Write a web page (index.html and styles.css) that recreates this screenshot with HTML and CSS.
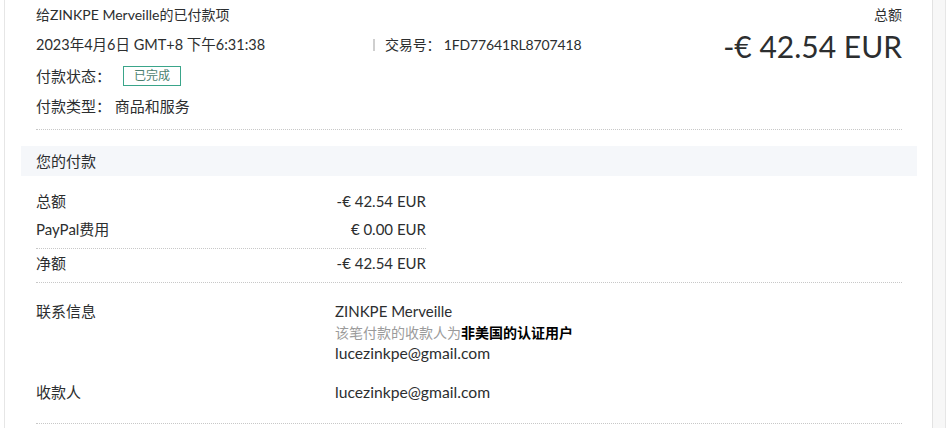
FILE: index.html
```html
<!DOCTYPE html>
<html lang="zh">
<head>
<meta charset="utf-8">
<title>交易详情</title>
<link rel="stylesheet" href="styles.css">
</head>
<body>
<div class="frame">
  <div class="panel">
    <div class="summary">
      <div class="info">
        <div class="line title">给ZINKPE Merveille的已付款项</div>
        <div class="line date-row">
          <span class="date">2023年4月6日 GMT+8 下午6:31:38</span>
          <span class="sep"></span>
          <span class="txn">交易号： 1FD77641RL8707418</span>
        </div>
        <div class="line status-row">
          <span>付款状态：</span>
          <span class="badge">已完成</span>
        </div>
        <div class="line big">付款类型： 商品和服务</div>
      </div>
      <div class="total">
        <div class="total-label">总额</div>
        <div class="total-amount">-€ 42.54 EUR</div>
      </div>
    </div>

    <div class="section-head">您的付款</div>

    <div class="amounts">
      <div class="arow"><span>总额</span><span>-€ 42.54 EUR</span></div>
      <div class="arow"><span>PayPal费用</span><span>€ 0.00 EUR</span></div>
      <div class="arow net"><span>净额</span><span>-€ 42.54 EUR</span></div>
    </div>

    <div class="details">
      <div class="drow">
        <div class="dlabel">联系信息</div>
        <div class="dval">
          <div>ZINKPE Merveille</div>
          <div class="note">该笔付款的收款人为<b>非美国的认证用户</b></div>
          <div class="email">lucezinkpe@gmail.com</div>
        </div>
      </div>
      <div class="drow payee">
        <div class="dlabel">收款人</div>
        <div class="dval email">lucezinkpe@gmail.com</div>
      </div>
    </div>
  </div>
  <div class="strip"></div>
</div>
</body>
</html>
```
FILE: styles.css
```css
* { box-sizing: border-box; }
html, body { margin: 0; padding: 0; background: #fff; }
body {
  font-family: Lato, "Noto Sans CJK SC", sans-serif;
  font-size: 14px;
  color: #2c2e2f;
  height: 428px;
  overflow: hidden;
}
.frame {
  display: flex;
  height: 428px;
  padding-left: 4px;
}
.panel {
  width: 929px;
  border-left: 1px solid #e6e6e6;
  border-right: 1px solid #e2e2e2;
  padding: 0 0 0 31px;
}
.strip {
  width: 13px;
  background: #f7f7f7;
  border-right: 1px solid #e6e6e6;
}
.summary {
  display: flex;
  justify-content: space-between;
  width: 866px;
  border-bottom: 1px dotted #c8c8c8;
  padding-bottom: 8px;
}
.line {
  height: 30px;
  line-height: 30px;
  white-space: nowrap;
}
.big { font-size: 15px; }
.status-row { height: 31px; display: flex; align-items: center; font-size: 15px; }
.date-row { display: flex; align-items: center; font-size: 14.5px; }
.date { width: 337px; }
.txn { font-size: 14px; letter-spacing: -0.15px; }
.sep {
  width: 2px;
  height: 12px;
  background: #cfcfcf;
  margin-right: 10px;
}
.badge {
  display: inline-block;
  margin-left: 12px;
  border: 1px solid #3aa58a;
  color: #4c7f70;
  font-size: 12px;
  line-height: 18px;
  height: 20px;
  padding: 0 10px;
}
.total { text-align: right; }
.total-label { line-height: 30px; height: 30px; }
.total-amount { font-size: 30px; line-height: 32px; }
.section-head {
  margin: 16px 15px 0 -15px;
  background: #f5f7fa;
  height: 30px;
  line-height: 30px;
  padding-left: 15px;
  font-size: 15px;
}
.amounts { width: 390px; padding-top: 10px; font-size: 15px; }
.arow {
  display: flex;
  justify-content: space-between;
  height: 28px;
  line-height: 28px;
  padding-top: 1px;
}
.arow.net {
  border-top: 1px dotted #c8c8c8;
  margin-top: 6px;
  line-height: 26px;
}
.details {
  width: 866px;
  border-top: 1px dotted #c8c8c8;
  margin-top: 6px;
  padding-top: 18px;
  font-size: 15px;
}
.drow { display: flex; line-height: 21px; }
.dlabel { width: 299px; }
.email { font-size: 15.7px; }
.note { color: #9b9b9b; font-size: 14px; }
.note b { color: #000; font-weight: bold; }
.payee {
  margin-top: 18px;
  padding-bottom: 20px;
  border-bottom: 1px dotted #c8c8c8;
}
```
